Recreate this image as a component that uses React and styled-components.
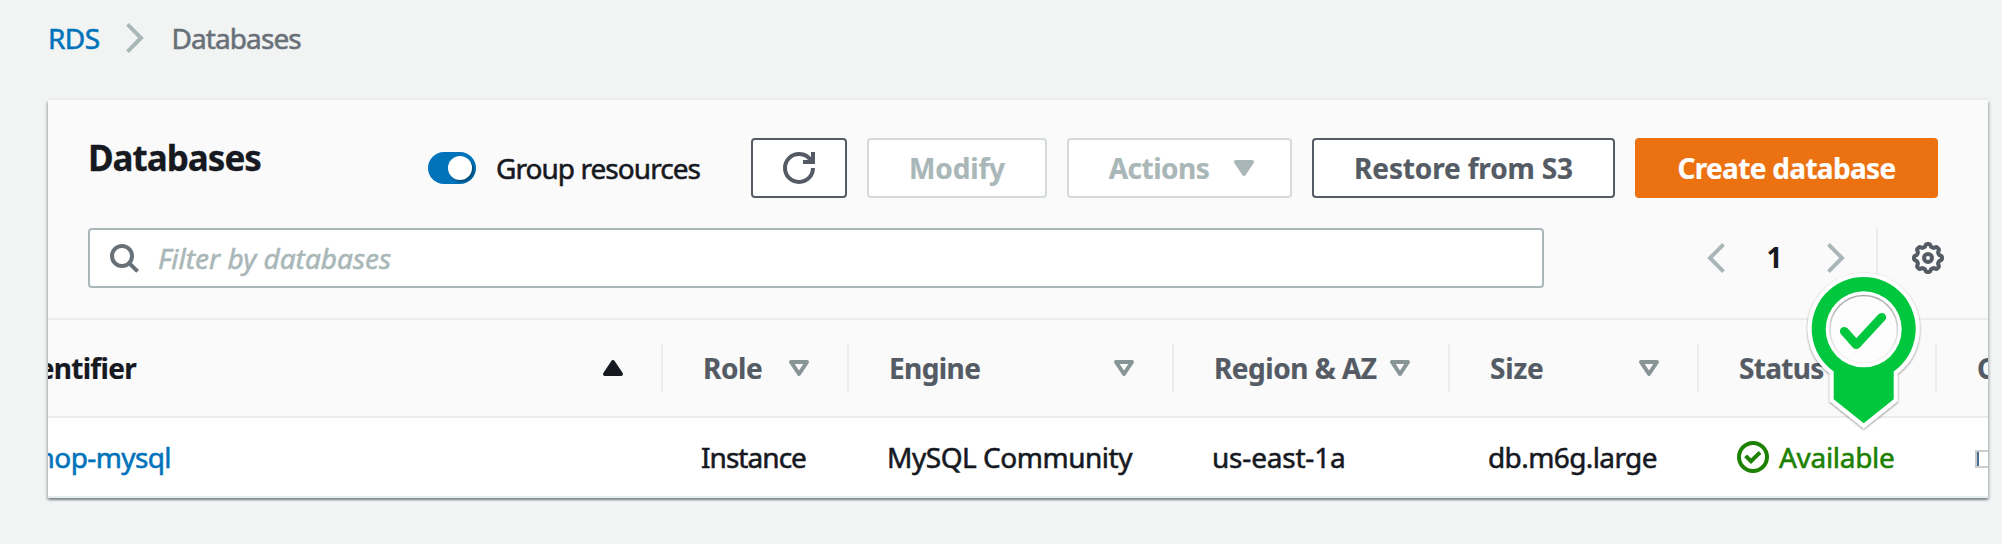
import React from 'react';
import styled, { createGlobalStyle, css } from 'styled-components';

const GlobalStyle = createGlobalStyle`
  *, *::before, *::after { box-sizing: border-box; }
  body {
    margin: 0;
    background: #f2f3f3;
    color: #16191f;
    font-family: "Noto Sans", "Open Sans", sans-serif;
    font-size: 28px;
    line-height: 36px;
    overflow: hidden;
  }
`;

const Page = styled.div`
  position: relative;
  width: 2002px;
  height: 544px;
  overflow: hidden;
`;

const Label = styled.span`
  white-space: nowrap;
  letter-spacing: ${(p) => p.$track || 0}px;
  font-weight: ${(p) => (p.$bold ? 700 : 400)};
  -webkit-text-stroke: ${(p) => (p.$bold ? 0.2 : 0.55)}px currentColor;
`;

const Icon = styled.svg`
  display: block;
  flex: none;
  fill: none;
  stroke: currentColor;
  stroke-width: 4;
  overflow: visible;
`;

/* Breadcrumb */
const Breadcrumbs = styled.nav`
  display: flex;
  align-items: center;
  height: 98px;
  padding: 0 0 23px 48px;
  color: #687078;

  ${Icon} { color: #aab7b8; margin: 0 27px 0 27px; }
`;
const Crumb = styled.a`
  color: ${(p) => (p.$current ? '#687078' : '#0073bb')};
  text-decoration: none;
`;

/* Panel */
const Panel = styled.section`
  width: 1940px;
  margin-left: 48px;
  background: #fff;
  box-shadow:
    0 -2px 0 #eaeded,
    0 2px 2px 0 rgba(0, 28, 36, 0.3),
    2px 2px 2px 0 rgba(0, 28, 36, 0.15),
    -2px 2px 2px 0 rgba(0, 28, 36, 0.15);
  margin-top: 2px;
`;
const PanelHeader = styled.header`
  height: 220px;
  padding: 38px 50px 0 40px;
  background: #fafafa;
  border-bottom: 2px solid #eaeded;
`;
const Toolbar = styled.div`
  display: flex;
  align-items: center;
  justify-content: space-between;
  height: 60px;
`;
const Title = styled.h2`
  margin: 0;
  padding-bottom: 21px;
  font-size: 35px;
  line-height: 40px;
  font-weight: 700;
  letter-spacing: -1px;
  -webkit-text-stroke: 0.3px currentColor;
`;
const Actions = styled.div`
  display: flex;
  align-items: center;
  gap: 20px;
`;
const ToggleField = styled.label`
  display: flex;
  align-items: center;
  gap: 20px;
  width: 303px;

  ${Label} { padding-bottom: 1px; }
`;
const Switch = styled.span`
  display: flex;
  justify-content: flex-end;
  width: 48px;
  height: 32px;
  padding: 4px;
  border-radius: 16px;
  background: #0073bb;
`;
const Knob = styled.span`
  width: 24px;
  height: 24px;
  border-radius: 50%;
  background: #fff;
  box-shadow: 2px 2px 2px rgba(0, 28, 36, 0.45);
`;

const variants = {
  normal: css`background: #fff; border-color: #545b64; color: #545b64;`,
  disabled: css`background: #fff; border-color: #d5dbdb; color: #aab7b8;`,
  primary: css`background: #ec7211; border-color: #ec7211; color: #fff;`,
};
const Button = styled.button`
  display: flex;
  align-items: center;
  justify-content: center;
  gap: 25px;
  width: ${(p) => p.$width}px;
  height: 60px;
  padding: 0 0 0 ${(p) => p.$inset || 0}px;
  border: 2px solid;
  border-radius: 4px;
  font: inherit;
  ${(p) => variants[p.$variant || 'normal']}

  ${Label} { padding-bottom: 1px; }
`;

/* Filter row */
const FilterRow = styled.div`
  display: flex;
  align-items: center;
  height: 60px;
  margin-top: 30px;
`;
const SearchBox = styled.div`
  display: flex;
  flex: none;
  align-items: center;
  gap: 18px;
  width: 1456px;
  height: 60px;
  padding-left: 20px;
  border: 2px solid #aab7b8;
  border-radius: 4px;
  background: #fff;
  color: #687078;

  ${Label} { color: #aab7b8; font-style: italic; }
`;
const Pagination = styled.div`
  display: flex;
  flex: none;
  align-items: center;
  width: 334px;
  height: 60px;
  padding-left: 163px;
  border-right: 2px solid #eaeded;
  color: #aab7b8;
`;
const PageNumber = styled.span`
  width: 102px;
  padding: 0 3px 2px 0;
  color: #16191f;
  font-weight: 700;
  text-align: center;
`;
const Settings = styled.div`
  flex: none;
  margin-left: 34px;
  color: #545b64;
`;

/* Table */
const columns = '615px 186px 325px 276px 249px 238px 51px';
const HeadRow = styled.div`
  display: grid;
  grid-template-columns: ${columns};
  align-items: center;
  height: 98px;
  background: #fafafa;
  border-bottom: 2px solid #eaeded;
  color: #545b64;
  overflow: hidden;
`;
const HeadCell = styled.div`
  display: flex;
  align-items: center;
  justify-content: space-between;
  height: 48px;
  padding: 0 38px 0 ${(p) => (p.$first ? 0 : 40)}px;
  border-right: ${(p) => (p.$last ? 0 : 2)}px solid #eaeded;
  color: ${(p) => (p.$first ? '#16191f' : 'inherit')};

  ${Icon} { color: ${(p) => (p.$first ? '#16191f' : '#879596')}; }
`;
const BodyRow = styled.div`
  display: grid;
  grid-template-columns: ${columns};
  align-items: center;
  height: 80px;
  border-bottom: 2px solid #eaeded;
  overflow: hidden;
`;
const Cell = styled.div`
  display: flex;
  align-items: center;
  gap: 10px;
  padding-left: ${(p) => (p.$first ? 0 : 38)}px;
`;
/* Holds the scrolled-off first column; its text ends at the given width. */
const Scrolled = styled.div`
  display: flex;
  justify-content: flex-end;
  width: ${(p) => p.$width}px;
  color: ${(p) => (p.$link ? '#0073bb' : 'inherit')};
`;
const Status = styled(Cell)`
  color: #1d8102;
`;
const Meter = styled.div`
  flex: none;
  width: 60px;
  height: 18px;
  border: 2px solid #ccc;
  background: linear-gradient(to right, #486f8f 2px, #fff 2px);
`;
const MeterCell = styled(Cell)`
  padding-top: 4px;
`;

const Pin = styled.svg`
  position: absolute;
  left: 1800px;
  top: 266px;
  overflow: visible;
`;

const gearPath = (() => {
  const pts = [];
  for (let i = 0; i < 144; i += 1) {
    const a = (i / 144) * Math.PI * 2;
    const wave = Math.tanh(2 * Math.cos(8 * a)) / Math.tanh(2);
    const r = 12.7 + 1.3 * wave;
    pts.push(`${(16 + r * Math.cos(a)).toFixed(2)} ${(16 + r * Math.sin(a)).toFixed(2)}`);
  }
  return `M${pts.join('L')}Z`;
})();

const ChevronRight = () => (
  <Icon width="18" height="30" viewBox="0 0 18 30"><path d="M1.5 1.4 15 15 1.5 28.6" /></Icon>
);
const ChevronLeft = () => (
  <Icon width="18" height="30" viewBox="0 0 18 30"><path d="M16.5 1.4 3 15 16.5 28.6" /></Icon>
);
const Caret = ({ filled, up }) => (
  <Icon width="20" height="16" viewBox="0 0 20 16" strokeLinejoin="round">
    <path d={up ? 'M2 14h16L10 2z' : 'M2 2h16l-8 12z'} fill={filled ? 'currentColor' : 'none'} />
  </Icon>
);

const headings = [
  ['Role', -0.4],
  ['Engine', -0.6],
  ['Region & AZ', -0.5],
  ['Size', -0.2],
  ['Status', -0.7],
];
const values = [
  ['Instance', -0.95],
  ['MySQL Community', -0.47],
  ['us-east-1a', -0.2],
  ['db.m6g.large', -0.6],
];

export default function App() {
  return (
    <Page>
      <GlobalStyle />
      <Breadcrumbs>
        <Crumb><Label $track={-0.6}>RDS</Label></Crumb>
        <ChevronRight />
        <Crumb $current><Label $track={-0.9}>Databases</Label></Crumb>
      </Breadcrumbs>

      <Panel>
        <PanelHeader>
          <Toolbar>
            <Title>Databases</Title>
            <Actions>
              <ToggleField>
                <Switch><Knob /></Switch>
                <Label $track={-0.95}>Group resources</Label>
              </ToggleField>
              <Button $width={96}>
                <Icon width="32" height="32" viewBox="0 0 16 16">
                  <g strokeWidth="2">
                    <path d="M10 5h5V0" />
                    <path d="M15 8a6.957 6.957 0 0 1-7 7 6.957 6.957 0 0 1-7-7 6.957 6.957 0 0 1 7-7 6.87 6.87 0 0 1 6.3 4" />
                  </g>
                </Icon>
              </Button>
              <Button $width={180} $variant="disabled"><Label $bold $track={-0.15}>Modify</Label></Button>
              <Button $width={225} $variant="disabled" $inset={4}>
                <Label $bold $track={-0.5}>Actions</Label>
                <Caret filled />
              </Button>
              <Button $width={303}><Label $bold $track={-0.15}>Restore from S3</Label></Button>
              <Button $width={303} $variant="primary"><Label $bold $track={-0.68}>Create database</Label></Button>
            </Actions>
          </Toolbar>
          <FilterRow>
            <SearchBox>
              <Icon width="30" height="30" viewBox="0 0 30 30">
                <circle cx="12" cy="13" r="10" />
                <path d="M19 20 27.6 28.4" />
              </Icon>
              <Label>Filter by databases</Label>
            </SearchBox>
            <Pagination>
              <ChevronLeft />
              <PageNumber>1</PageNumber>
              <ChevronRight />
            </Pagination>
            <Settings>
              <Icon width="32" height="32" viewBox="0 0 32 32">
                <path d={gearPath} />
                <circle cx="16" cy="16" r="4" />
              </Icon>
            </Settings>
          </FilterRow>
        </PanelHeader>

        <HeadRow>
          <HeadCell $first>
            <Scrolled $width={88}><Label $bold $track={-0.7}>DB identifier</Label></Scrolled>
            <Caret filled up />
          </HeadCell>
          {headings.map(([text, track]) => (
            <HeadCell key={text}>
              <Label $bold $track={track}>{text}</Label>
              <Caret />
            </HeadCell>
          ))}
          <HeadCell $last><Label $bold>CPU</Label></HeadCell>
        </HeadRow>
        <BodyRow>
          <Cell $first>
            <Scrolled $width={123} $link><Label $track={-0.6}>shop-mysql</Label></Scrolled>
          </Cell>
          {values.map(([text, track]) => (
            <Cell key={text}><Label $track={track}>{text}</Label></Cell>
          ))}
          <Status>
            <Icon width="32" height="32" viewBox="0 0 32 32">
              <circle cx="16" cy="16" r="14" />
              <path d="M8.6 14.8 14 20.2 23 11.3" />
            </Icon>
            <Label $track={-0.3}>Available</Label>
          </Status>
          <MeterCell><Meter /></MeterCell>
        </BodyRow>
      </Panel>

      <Pin width="128" height="172" viewBox="0 0 128 172">
        <defs>
          <filter id="pinShadow" x="-20%" y="-20%" width="140%" height="140%">
            <feDropShadow dx="0" dy="1" stdDeviation="1.2" floodColor="#000" floodOpacity="0.5" />
          </filter>
          <linearGradient id="discEdge" x1="0" y1="0" x2="0" y2="1">
            <stop offset="0" stopColor="#a8a8a8" />
            <stop offset="0.6" stopColor="#dedede" />
            <stop offset="1" stopColor="#f6f6f6" />
          </linearGradient>
        </defs>
        <path
          d="M33.7 105.4A52 52 0 1 1 93.7 105.4V133.3L63.7 157.3 33.7 133.3Z"
          fill="#fff" stroke="#fff" strokeWidth="8" filter="url(#pinShadow)"
        />
        <path d="M33.7 105.4A52 52 0 1 1 93.7 105.4V133.3L63.7 157.3 33.7 133.3Z" fill="#00c73e" />
        <circle cx="63.7" cy="63.3" r="38" fill="#fff" />
        <circle cx="63.7" cy="63.3" r="33.8" fill="#fdfdfd" stroke="url(#discEdge)" strokeWidth="1.6" />
        <path
          d="M44.3 65.3 56.3 78.7 81.7 51.3"
          fill="none" stroke="#00c73e" strokeWidth="8.8" strokeLinecap="round" strokeLinejoin="round"
        />
      </Pin>
    </Page>
  );
}
